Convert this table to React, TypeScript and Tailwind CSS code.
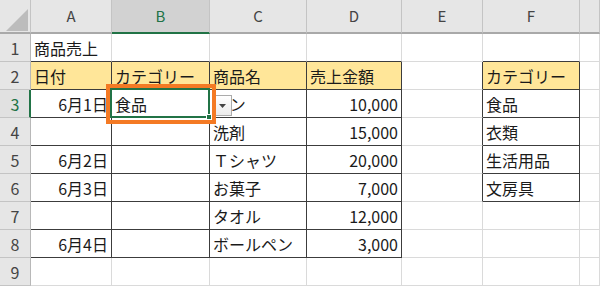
import React from 'react';

// シートの列幅（行番号列 + A〜F + G の余り）
const columns = ['A', 'B', 'C', 'D', 'E', 'F', ''];

// セルの値（1行目〜9行目、A〜G列）
const rows: string[][] = [
  ['商品売上', '', '', '', '', '', ''],
  ['日付', 'カテゴリー', '商品名', '売上金額', '', 'カテゴリー', ''],
  ['6月1日', '食品', 'パン', '10,000', '', '食品', ''],
  ['', '', '洗剤', '15,000', '', '衣類', ''],
  ['6月2日', '', 'Ｔシャツ', '20,000', '', '生活用品', ''],
  ['6月3日', '', 'お菓子', '7,000', '', '文房具', ''],
  ['', '', 'タオル', '12,000', '', '', ''],
  ['6月4日', '', 'ボールペン', '3,000', '', '', ''],
  ['', '', '', '', '', '', ''],
];

// 罫線で囲まれた範囲（A2:D8 と F2:F6）
const inTable = (r: number, c: number) =>
  (r >= 1 && r <= 7 && c >= 0 && c <= 3) || (r >= 1 && r <= 5 && c === 5);

const isHeader = (r: number, c: number) => r === 1 && (c <= 3 || c === 5);

const isRight = (r: number, c: number) => r >= 2 && (c === 0 || c === 3);

const font = { fontFamily: '"Noto Sans CJK JP", "Noto Sans", sans-serif' };

// 入力規則のドロップダウンボタン
const DropButton: React.FC = () => (
  <div className="absolute left-[3px] top-[5px] z-10 flex h-[21px] w-[19px] items-center justify-center border border-[#ababab] bg-gradient-to-b from-white to-[#ebebeb]">
    <svg width="7" height="4" viewBox="0 0 7 4">
      <path d="M0 0h7L3.5 4z" fill="#444" />
    </svg>
  </div>
);

// 選択セルの枠・フィルハンドル・強調枠
const Selection: React.FC = () => (
  <>
    <div className="pointer-events-none absolute -left-[2px] -top-[2px] -right-[1px] -bottom-[1px] z-20 border-2 border-[#217346]" />
    <div className="absolute -bottom-[3px] -right-[3px] z-30 h-[6px] w-[6px] border border-white bg-[#217346]" />
    <div className="pointer-events-none absolute -left-[6px] -top-[6px] -right-[7px] -bottom-[7px] z-40 border-4 border-[#f47a24]" />
  </>
);

const App: React.FC = () => {
  return (
    <div
      className="grid h-[287px] w-[600px] grid-cols-[31px_81px_98px_97px_95px_81px_97px_1fr] grid-rows-[34px_repeat(9,28px)_1fr] overflow-hidden bg-white text-[16px] text-[#1a1a1a]"
      style={font}
    >
      {/* 左上の全選択ボタン */}
      <div className="flex items-end justify-end border-b-2 border-r border-b-[#a9a9a9] border-r-[#c4c4c4] bg-[#e6e6e6] pb-[1px] pr-[2px]">
        <svg width="22" height="22" viewBox="0 0 22 22">
          <path d="M22 0V22H0z" fill="#bcbcbc" />
        </svg>
      </div>

      {/* 列見出し */}
      {columns.map((col, c) => (
        <div
          key={col || 'G'}
          className={
            c === 1
              ? 'flex items-center justify-center border-b-2 border-r border-b-[#217346] border-r-[#c4c4c4] bg-[#d2d2d2] pt-[1px] text-[15px] text-[#217346]'
              : 'flex items-center justify-center border-b-2 border-r border-b-[#a9a9a9] border-r-[#c4c4c4] bg-[#e6e6e6] pt-[1px] text-[15px] text-[#444]'
          }
        >
          {col}
        </div>
      ))}

      {rows.map((row, r) => (
        <React.Fragment key={r}>
          {/* 行番号 */}
          <div
            className={
              r === 2
                ? 'flex items-center justify-center border-b border-r-2 border-b-[#c4c4c4] border-r-[#217346] bg-[#e1e1e1] pl-[1px] text-[#217346]'
                : 'flex items-center justify-center border-b border-r border-b-[#c4c4c4] border-r-[#b8b8b8] bg-[#e6e6e6] text-[#444]'
            }
          >
            {r + 1}
          </div>

          {row.map((value, c) => {
            const darkRight = inTable(r, c) || inTable(r, c + 1);
            const darkBottom = inTable(r, c) || inTable(r + 1, c);
            return (
              <div
                key={c}
                className={[
                  'relative flex items-center whitespace-nowrap border-b border-r px-[3px] pt-[1px] leading-none',
                  darkRight ? 'border-r-[#3c3c3c]' : 'border-r-[#dadada]',
                  darkBottom ? 'border-b-[#3c3c3c]' : 'border-b-[#dadada]',
                  isHeader(r, c) ? 'bg-[#ffe699]' : 'bg-white',
                  isRight(r, c) ? 'justify-end' : 'justify-start',
                  r === 0 && c === 0 ? 'z-10 overflow-visible' : '',
                ].join(' ')}
              >
                <span>{value}</span>
                {r === 2 && c === 1 && <Selection />}
                {r === 2 && c === 2 && <DropButton />}
              </div>
            );
          })}
        </React.Fragment>
      ))}
    </div>
  );
};

export default App;
